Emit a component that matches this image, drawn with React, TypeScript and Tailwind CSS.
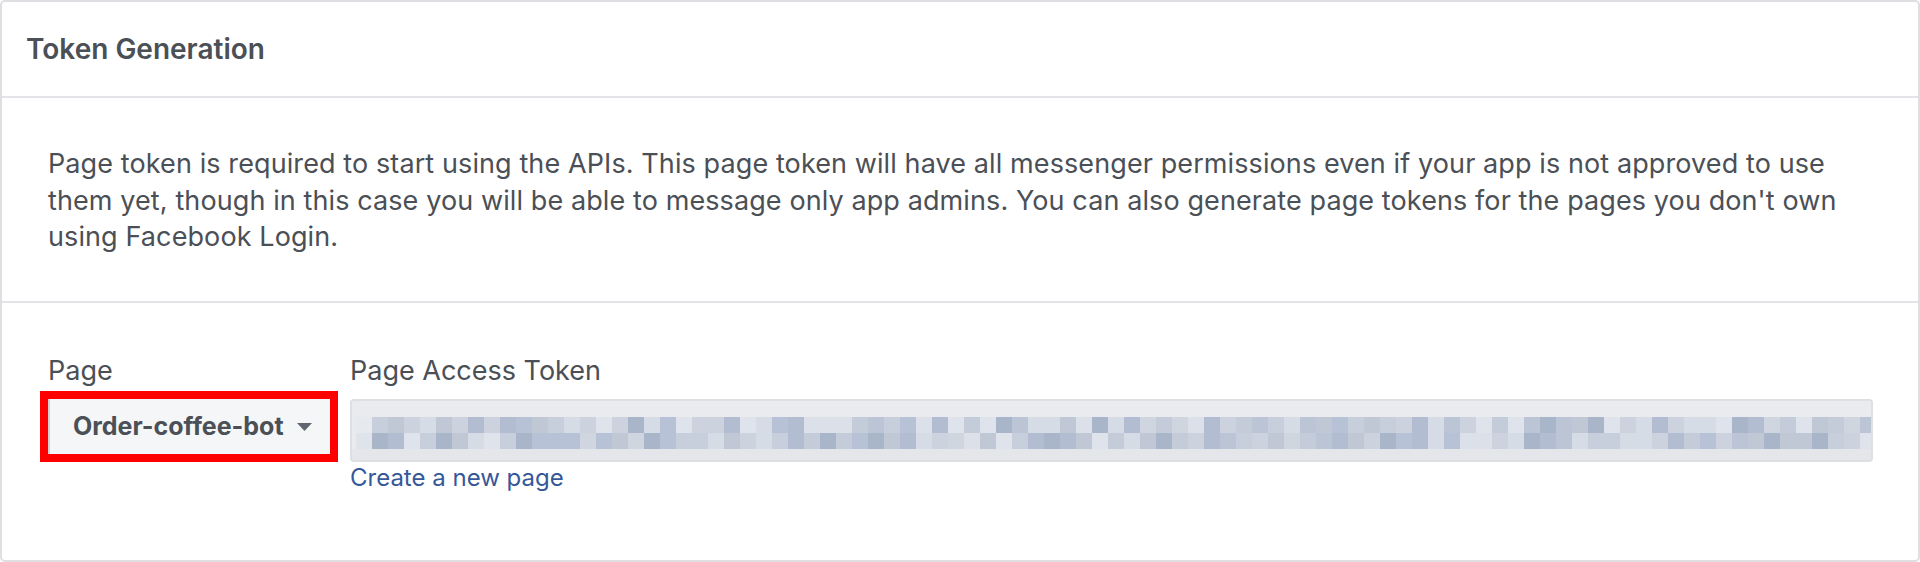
import React from "react";

const palette = [
  "#b7c2d6",
  "#c4ccda",
  "#ccd3df",
  "#d6dce6",
  "#bcc5d6",
  "#a9b5c9",
  "#dfe4ec",
  "#c7cfdc",
  "#b2bdd1",
  "#d0d6e0",
  "#c0c8d6",
  "#dce1e9",
];

function makeRand(seed: number) {
  let a = seed;
  return () => {
    a |= 0;
    a = (a + 0x6d2b79f5) | 0;
    let t = Math.imul(a ^ (a >>> 15), 1 | a);
    t = (t + Math.imul(t ^ (t >>> 7), 61 | t)) ^ t;
    return ((t ^ (t >>> 14)) >>> 0) / 4294967296;
  };
}

function BlurredToken() {
  const rand = makeRand(42);
  const cols = 95;
  const rects: React.ReactNode[] = [];
  for (let i = 0; i < cols; i++) {
    const x = 4 + i * 16;
    const top = i === 0 ? "#e6e9ee" : palette[Math.floor(rand() * palette.length)];
    const bottom = i === 0 ? "#dfe3ea" : palette[Math.floor(rand() * palette.length)];
    rects.push(<rect key={`t${i}`} x={x} y={16} width={16} height={16} fill={top} />);
    rects.push(<rect key={`b${i}`} x={x} y={32} width={16} height={16} fill={bottom} />);
  }
  return (
    <svg width="100%" height="59" className="block" preserveAspectRatio="none">
      <rect x="0" y="0" width="100%" height="16" fill="#e9ebef" />
      <rect x="0" y="48" width="100%" height="11" fill="#e4e6ea" />
      {rects}
    </svg>
  );
}

export default function App() {
  return (
    <div className="h-[562px] w-[1920px] bg-white font-['Inter',sans-serif] text-[#4b4f56]">
      <div className="flex h-full flex-col rounded-[5px] border-2 border-[#dddfe2] bg-white">
        <div className="flex h-[96px] shrink-0 items-center border-b-2 border-[#e3e4e8] pl-[24px]">
          <h2 className="text-[28px] font-semibold leading-none">Token Generation</h2>
        </div>

        <div className="border-b-2 border-[#e3e4e8] pb-[45px] pl-[46px] pr-[36px] pt-[48px]">
          <p className="text-[27px] leading-[36.67px] tracking-[0.1px]">
            Page token is required to start using the APIs. This page token will have all
            messenger permissions even if your app is not approved to use
            <br />
            them yet, though in this case you will be able to message only app admins. You can
            also generate page tokens for the pages you don't own
            <br />
            using Facebook Login.
          </p>
        </div>

        <div className="flex gap-5 pl-[46px] pr-[45px] pt-[52px]">
          <div className="flex w-[282px] shrink-0 flex-col">
            <label className="mb-3 text-[27px] leading-[32px]">Page</label>
            <button className="flex h-[55px] items-center border-l-2 border-[#ccd0d5] bg-[#f5f6f7] pl-[23px] text-[25px] font-bold outline-8 outline-[#ff0000]">
              Order-coffee-bot
              <svg width="15" height="8" viewBox="0 0 15 8" className="ml-[13px]">
                <path d="M0 0h15L7.5 8z" fill="#606770" />
              </svg>
            </button>
          </div>

          <div className="flex min-w-0 flex-1 flex-col">
            <label className="mb-3 text-[27px] leading-[32px]">Page Access Token</label>
            <div className="h-[63px] overflow-hidden rounded-[4px] border-2 border-[#dddfe2] bg-[#e9ebef]">
              <BlurredToken />
            </div>
            <a href="#" className="pt-[1px] text-[24px] leading-[29px] text-[#365899]">
              Create a new page
            </a>
          </div>
        </div>
      </div>
    </div>
  );
}
